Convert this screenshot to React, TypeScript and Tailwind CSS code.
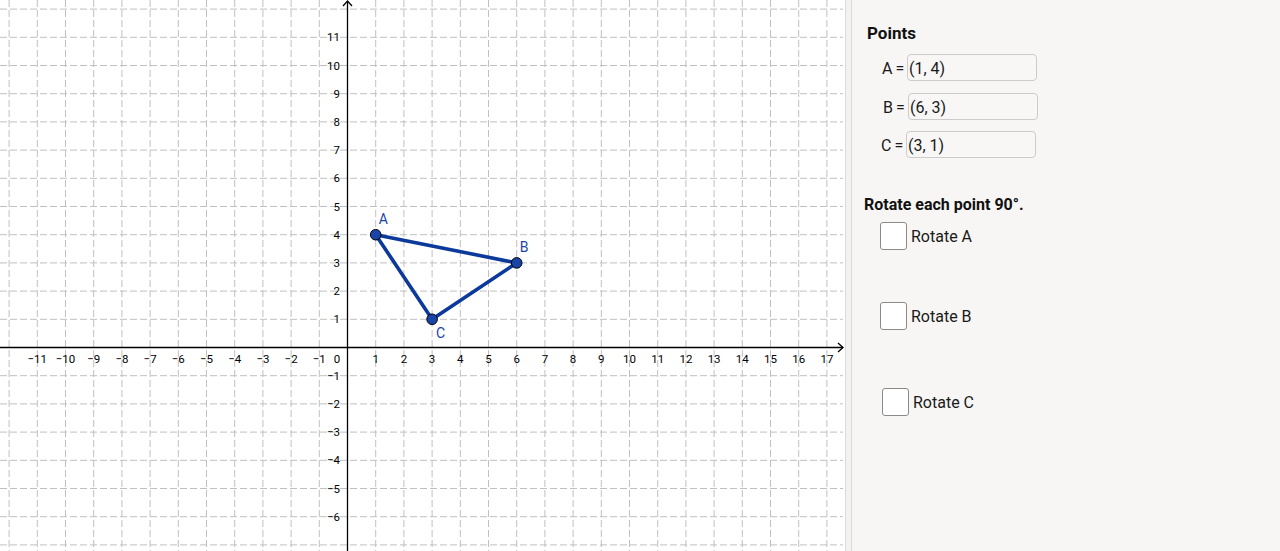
import React from 'react';

const UNIT = 28.2;
const OX = 347.5;
const OY = 347.5;
const GW = 845;
const GH = 551;

const X = (i: number) => OX + UNIT * i;
const Y = (j: number) => OY - UNIT * j;

const range = (a: number, b: number) => {
  const r: number[] = [];
  for (let i = a; i <= b; i++) r.push(i);
  return r;
};

const label = (n: number) => (n < 0 ? `\u2212${-n}` : `${n}`);

const Graph: React.FC = () => {
  const pts = { A: [1, 4], B: [6, 3], C: [3, 1] } as const;
  const p = (k: keyof typeof pts) => [X(pts[k][0]), Y(pts[k][1])];
  const [ax, ay] = p('A');
  const [bx, by] = p('B');
  const [cx, cy] = p('C');

  return (
    <svg width={GW} height={GH} className="block shrink-0 bg-white" style={{ fontFamily: 'Roboto, "Noto Sans", sans-serif' }}>
      {/* grid */}
      <g stroke="#c0c0c0" strokeWidth={1} strokeDasharray="7 3">
        {range(-12, 17).map((i) => (i === 0 ? null : <line key={`v${i}`} x1={X(i)} y1={0} x2={X(i)} y2={GH} />))}
        {range(-7, 12).map((j) => (j === 0 ? null : <line key={`h${j}`} x1={0} y1={Y(j)} x2={GW - 2} y2={Y(j)} />))}
      </g>

      {/* axes */}
      <g stroke="#000" strokeWidth={1.3} fill="none">
        <line x1={0} y1={OY} x2={843} y2={OY} />
        <polyline points={`838,${OY - 4.5} 843,${OY} 838,${OY + 4.5}`} />
        <line x1={OX} y1={1} x2={OX} y2={GH} />
        <polyline points={`${OX - 4.5},6 ${OX},1 ${OX + 4.5},6`} />
      </g>

      {/* axis numbers */}
      <g fontSize={11.5} fill="#000">
        {range(-11, 17).map((i) =>
          i === 0 ? (
            <text key={`xl${i}`} x={337} y={363} textAnchor="middle">0</text>
          ) : (
            <text key={`xl${i}`} x={X(i)} y={363} textAnchor="middle">{label(i)}</text>
          )
        )}
        {range(-6, 11).map((j) =>
          j === 0 ? null : (
            <text key={`yl${j}`} x={340} y={Y(j) + 4} textAnchor="end">{label(j)}</text>
          )
        )}
      </g>

      {/* triangle */}
      <g stroke="#0c3a9a" strokeWidth={3.6} strokeLinecap="round">
        <line x1={ax} y1={ay} x2={bx} y2={by} />
        <line x1={bx} y1={by} x2={cx} y2={cy} />
        <line x1={cx} y1={cy} x2={ax} y2={ay} />
      </g>
      <g fill="#1a45a8" stroke="#000" strokeWidth={1}>
        <circle cx={ax} cy={ay} r={5.3} />
        <circle cx={bx} cy={by} r={5.3} />
        <circle cx={cx} cy={cy} r={5.3} />
      </g>
      <g fill="#1a45a8" fontSize={14}>
        <text x={ax + 3} y={ay - 11}>A</text>
        <text x={bx + 3} y={by - 11}>B</text>
        <text x={cx + 4} y={cy + 19}>C</text>
      </g>
    </svg>
  );
};

const PointInput: React.FC<{ name: string; value: string; className?: string }> = ({ name, value, className = '' }) => (
  <div className={`flex items-center ${className}`}>
    <span className="text-[16px] text-[#1a1a1a] w-[25px] whitespace-nowrap tracking-[-0.5px] pt-[2px]">{name} =</span>
    <div className="w-[130px] h-[27px] rounded-[4px] border border-[#cccccc] bg-[#f8f7f6] flex items-center pl-[1px] pt-[3px] text-[16px] text-[#1a1a1a]">
      {value}
    </div>
  </div>
);

const Check: React.FC<{ text: string; className?: string }> = ({ text, className = '' }) => (
  <label className={`flex items-center ${className}`}>
    <span className="w-[27px] h-[28px] rounded-[3px] border-[1.5px] border-[#8a8a8a] bg-white" />
    <span className="ml-[4px] pt-[2px] text-[16px] text-[#1a1a1a]">{text}</span>
  </label>
);

export default function App() {
  return (
    <div className="flex w-[1280px] h-[551px] overflow-hidden bg-white" style={{ fontFamily: 'Roboto, "Noto Sans", sans-serif' }}>
      <Graph />
      <div className="w-[7px] h-full bg-[#f3f2f1] border-x border-[#dddbd9]" />
      <div className="flex-1 h-full bg-[#f7f6f5] flex flex-col">
        <h2 className="ml-[15px] mt-[22px] text-[17px] leading-[22px] font-bold text-[#111]">Points</h2>
        <PointInput name="A" value="(1, 4)" className="ml-[30px] mt-[10px]" />
        <PointInput name="B" value="(6, 3)" className="ml-[31px] mt-[12px]" />
        <PointInput name="C" value="(3, 1)" className="ml-[29px] mt-[11px]" />
        <p className="ml-[12px] mt-[37px] text-[16px] leading-[20px] font-bold text-[#111]">Rotate each point 90°.</p>
        <Check text="Rotate A" className="ml-[28px] mt-[7px]" />
        <Check text="Rotate B" className="ml-[28px] mt-[52px]" />
        <Check text="Rotate C" className="ml-[30px] mt-[58px]" />
      </div>
    </div>
  );
}
